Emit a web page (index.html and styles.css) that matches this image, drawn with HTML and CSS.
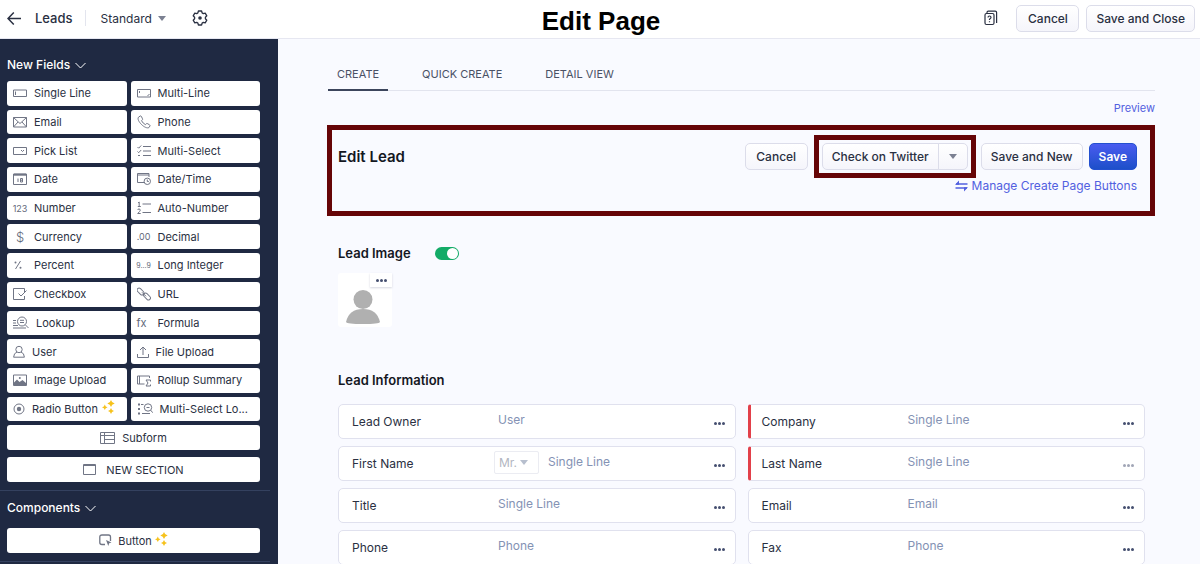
FILE: index.html
```html
<!DOCTYPE html>
<html lang="en">
<head>
  <meta charset="UTF-8" />
  <title>Edit Page</title>
  <link rel="stylesheet" href="styles.css">
</head>
<body>
  <header class="topbar">
    <div class="topbar-left">
      <button class="icon-btn" aria-label="Back">
        <svg width="14" height="14" viewBox="0 0 14 14"><path d="M14 7.500H1M6.800 1.500L1 7.500l5.800 6" stroke-width="1.500"/></svg>
      </button>
      <span class="module">Leads</span>
      <button class="layout-menu">Standard <span class="caret"></span></button>
      <button class="icon-btn" aria-label="Settings">
        <svg width="16" height="16" viewBox="0 0 16 16"><path d="M6.400 1h3.200l.5 1.900 1.200.7 1.900-.5 1.600 2.700-1.400 1.400v1.600l1.400 1.400-1.600 2.700-1.900-.5-1.200.7-.5 1.900H6.400l-.5-1.900-1.200-.7-1.900.5-1.600-2.700L2.600 8.800V7.200L1.200 5.800l1.600-2.700 1.900.5 1.200-.7z" stroke-width="1.300" stroke-linejoin="round"/><circle cx="8" cy="8" r="1.800" class="solid"/></svg>
      </button>
    </div>
    <h1>Edit Page</h1>
    <div class="topbar-right">
      <button class="icon-btn" aria-label="Help">
        <svg width="14" height="16" viewBox="0 0 14 16"><rect x="1" y="3.500" width="9" height="11" rx="1.500" stroke-width="1.200"/><path d="M3 3.200V2.500Q3 1.200 4.300 1.200h6.900Q12.600 1.200 12.600 2.600V13" stroke-width="1.200"/><path d="M4 7.500Q4 6 5.500 6T7 7.500Q7 8.300 5.500 9.200v.8M5.500 11.200v1" stroke-width="1.200"/></svg>
      </button>
      <button class="btn cancel">Cancel</button>
      <button class="btn">Save and Close</button>
    </div>
  </header>

  <div class="page">
    <aside class="sidebar">
      <h2>New Fields <svg width="11" height="7" viewBox="0 0 11 7"><path d="M.5 1l5 5 5-5"/></svg></h2>
      <div class="fields">
        <button class="field"><svg width="14" height="14" viewBox="0 0 14 14"><path d="M.5 4h13v6.500H.5zM2.500 5.500V9"/></svg>Single Line</button>
        <button class="field"><svg width="14" height="14" viewBox="0 0 14 14"><path d="M.5 3.500h13v7.500H.5zM2.500 5v2M10.500 10l2-2"/></svg>Multi-Line</button>
        <button class="field"><svg width="14" height="14" viewBox="0 0 14 14"><path d="M.5 2.500h13v9.500H.5zM.5 2.500L7 8.500l6.500-6M.5 12L5 7M13.500 12L9 7"/></svg>Email</button>
        <button class="field"><svg width="14" height="14" viewBox="0 0 14 14"><path d="M3.200 1L1.500 2.200C.2 4 2 7 4.500 9.500S10.300 13.600 12 12.500l1-1.600q.1-.8-.6-1.200L10.200 8.500q-.7-.2-1 .3l-.7.900Q6 8.500 4.500 5.700l.8-.8q.5-.5.2-1.100L4.300 1.300Q3.900.7 3.200 1z"/></svg>Phone</button>
        <button class="field"><svg width="14" height="14" viewBox="0 0 14 14"><path d="M.5 3.500h13v7H.5zM8 6l1.500 1.500L11 6"/></svg>Pick List</button>
        <button class="field"><svg width="14" height="14" viewBox="0 0 14 14"><path d="M6 2.500h8M6 7h8M6 11.500h8M.5 3l1.200 1.200L4.200 1.500M.5 7.500l1.200 1.200L4.200 6M1 11.500h2"/></svg>Multi-Select</button>
        <button class="field"><svg width="14" height="14" viewBox="0 0 14 14"><path d="M.5 2h13v10.500H.5z"/><path d="M1 2.700h12" stroke-width="2"/><path d="M5 6.500V10M7.500 6.500h2v3.500h-2zM7.500 8.200h2"/></svg>Date</button>
        <button class="field"><svg width="14" height="14" viewBox="0 0 14 14"><path d="M7 10.500H.5v-9h11.500V5M.5 3h11.500"/><circle cx="10.300" cy="9.300" r="3.200"/><path d="M10.300 7.500v2h1.500"/></svg>Date/Time</button>
        <button class="field"><span class="glyph">123</span>Number</button>
        <button class="field"><svg width="14" height="14" viewBox="0 0 14 14"><path d="M5.500 3H14M5.500 11.500H14M1 2l1.200-1v4.500M.8 5.500h3M.7 9q0-1 1.300-1t1.300 1.200Q3.300 10 .7 12.500h3"/></svg>Auto-Number</button>
        <button class="field"><span class="glyph large">$</span>Currency</button>
        <button class="field"><span class="glyph">.00</span>Decimal</button>
        <button class="field"><svg width="14" height="14" viewBox="0 0 14 14"><path d="M7.500 3l-5 8"/><circle class="solid" cx="2.500" cy="4.500" r="1"/><circle class="solid" cx="7.500" cy="9.800" r="1"/></svg>Percent</button>
        <button class="field"><span class="glyph small">9...9</span>Long Integer</button>
        <button class="field"><svg width="14" height="14" viewBox="0 0 14 14"><path d="M11.500 5V1.500H.5v11h11V9M5.500 6.500l2.500 2.500 5.500-5.500"/></svg>Checkbox</button>
        <button class="field"><svg width="14" height="14" viewBox="0 0 14 14"><rect x="-.5" y="2.500" width="8" height="4" rx="2" transform="rotate(45 3.500 4.500)"/><rect x="6" y="7.500" width="8" height="4" rx="2" transform="rotate(45 10 9.500)"/><path d="M5 5.300l4 4"/></svg>URL</button>
        <button class="field"><svg width="16" height="14" viewBox="0 0 16 14"><circle cx="9" cy="5.500" r="4.500"/><path d="M12.300 8.800l3.200 3.200M7 4.300h4M7 6.500h4M0 4.500h3M0 7h3M0 9.500h5M0 12h13"/></svg>Lookup</button>
        <button class="field"><span class="glyph fx">fx</span>Formula</button>
        <button class="field"><svg width="12" height="14" viewBox="0 0 12 14"><circle cx="6" cy="4.500" r="3.200"/><path d="M4 7Q.8 8 .6 12.200h10.800Q11.200 8 8 7"/></svg>User</button>
        <button class="field"><svg width="12" height="14" viewBox="0 0 12 14"><path d="M6 10V2M3 5l3-3 3 3M.5 9v3.500h11V9"/></svg>File Upload</button>
        <button class="field"><svg width="14" height="14" viewBox="0 0 14 14"><path d="M.5 2h13v10.500H.5z"/><path class="solid" d="M1 12V9.500l3-3 2.500 2.500L9.500 7l3.500 3v2z"/><circle class="solid" cx="6.800" cy="5" r="1"/></svg>Image Upload</button>
        <button class="field"><svg width="14" height="14" viewBox="0 0 14 14"><path d="M7.500 11H.5V3h12v2M2.500 3v8M13.500 8.500v-1.500H9l2 3-2 3h4.500v-1.500"/></svg>Rollup Summary</button>
        <button class="field"><svg width="12" height="14" viewBox="0 0 12 14"><circle cx="6" cy="7" r="5"/><circle class="solid" cx="6" cy="7" r="2.200"/></svg>Radio Button<svg class="sparkle" width="13" height="14" viewBox="0 0 13 14"><path d="M9 0q.7 3 3.700 3.500Q9.700 4 9 7 8.300 4 5.300 3.500 8.300 3 9 0zM2.800 4.500q.5 2.400 2.800 2.800-2.300.4-2.800 2.800Q2.300 7.700 0 7.300 2.300 6.900 2.800 4.500zM9 8q.6 2.500 3 3-2.400.5-3 3-.6-2.500-3-3 2.400-.5 3-3z"/></svg></button>
        <button class="field"><svg width="16" height="14" viewBox="0 0 16 14"><circle cx="11" cy="5.500" r="3.700"/><path d="M13.700 8.200l2 2.500M9.500 5.500h3M4 2.500h2.500M5 11.500h8"/><path d="M1 2.500h2M1 7h2M1 11.500h2" stroke-width="2"/></svg>Multi-Select Lo...</button>
        <button class="field wide"><svg width="15" height="12" viewBox="0 0 15 12"><path d="M.5.500h14v11H.5zM.5 3.500h14M4.500.500v11M4.500 7.500h10"/></svg>Subform</button>
      </div>
      <button class="field section-btn"><svg width="13" height="11" viewBox="0 0 13 11"><path d="M.5.500h12v10H.5zM.5 1.500h12"/></svg>NEW SECTION</button>
      <div class="components">
        <h2>Components <svg width="11" height="7" viewBox="0 0 11 7"><path d="M.5 1l5 5 5-5"/></svg></h2>
        <button class="field component"><svg width="13" height="13" viewBox="0 0 13 13"><path d="M6 10.500H3Q.8 10.500.8 8.500V3Q.8 1 3 1h6.500q2 0 2 2v4" stroke-width="1.300"/><path class="solid" d="M7 6l5.500 2.500-2.300.8-.9 2.600z"/></svg>Button<svg class="sparkle" width="13" height="14" viewBox="0 0 13 14"><path d="M9 0q.7 3 3.700 3.500Q9.700 4 9 7 8.300 4 5.300 3.500 8.300 3 9 0zM2.800 4.500q.5 2.400 2.800 2.800-2.300.4-2.800 2.800Q2.300 7.700 0 7.300 2.300 6.900 2.800 4.500zM9 8q.6 2.500 3 3-2.400.5-3 3-.6-2.500-3-3 2.400-.5 3-3z"/></svg></button>
      </div>
    </aside>

    <main class="content">
      <nav class="tabs">
        <a href="#create" class="active">CREATE</a>
        <a href="#quick">QUICK CREATE</a>
        <a href="#detail">DETAIL VIEW</a>
      </nav>
      <a href="#preview" class="preview">Preview</a>

      <section class="edit-lead">
        <h2>Edit Lead</h2>
        <div class="actions">
          <div class="buttons">
            <button class="btn cancel">Cancel</button>
            <div class="split">
              <button class="btn">Check on Twitter</button>
              <button class="btn more" aria-label="More buttons"><span class="caret"></span></button>
            </div>
            <button class="btn">Save and New</button>
            <button class="btn primary">Save</button>
          </div>
          <a href="#manage" class="manage"><svg width="13" height="12" viewBox="0 0 13 12"><path d="M1 4h11.500M.5 8H12" stroke-width="1.400"/><path class="solid" d="M0 4.700L4 .5v4.200zM13 7.300L9 11.500V7.300z"/></svg>Manage Create Page Buttons</a>
        </div>
      </section>

      <div class="lead-image">
        <label for="imageToggle">Lead Image</label>
        <input type="checkbox" id="imageToggle" class="toggle" checked>
      </div>
      <div class="avatar">
        <svg width="34" height="34" viewBox="0 0 34 34"><circle cx="17" cy="9.500" r="9.500"/><path d="M0 32Q3 19 17 19t17 13q-1 2-17 2T0 32z"/></svg>
        <button class="dots" aria-label="Image options"><i></i><i></i><i></i></button>
      </div>

      <h2 class="info-title">Lead Information</h2>
      <div class="cards">
        <div class="card"><span class="name">Lead Owner</span><span class="type">User</span><button class="dots" aria-label="Options"><i></i><i></i><i></i></button></div>
        <div class="card required"><span class="name">Company</span><span class="type">Single Line</span><button class="dots" aria-label="Options"><i></i><i></i><i></i></button></div>
        <div class="card"><label class="name" for="salutation">First Name</label><span class="select-wrap"><select id="salutation"><option>Mr.</option></select><span class="caret"></span></span><span class="type">Single Line</span><button class="dots" aria-label="Options"><i></i><i></i><i></i></button></div>
        <div class="card required"><span class="name">Last Name</span><span class="type">Single Line</span><button class="dots muted" aria-label="Options"><i></i><i></i><i></i></button></div>
        <div class="card"><span class="name">Title</span><span class="type">Single Line</span><button class="dots" aria-label="Options"><i></i><i></i><i></i></button></div>
        <div class="card"><span class="name">Email</span><span class="type">Email</span><button class="dots" aria-label="Options"><i></i><i></i><i></i></button></div>
        <div class="card"><span class="name">Phone</span><span class="type">Phone</span><button class="dots" aria-label="Options"><i></i><i></i><i></i></button></div>
        <div class="card"><span class="name">Fax</span><span class="type">Phone</span><button class="dots" aria-label="Options"><i></i><i></i><i></i></button></div>
      </div>
    </main>
  </div>
</body>
</html>
```

FILE: styles.css
```css
* {
  box-sizing: border-box;
}
body {
  margin: 0;
  height: 100vh;
  display: flex;
  flex-direction: column;
  overflow: hidden;
  font-family: Inter, "Liberation Sans", sans-serif;
  font-size: 12px;
  color: #2a3042;
  background: #f9faff;
}
button {
  font: inherit;
  color: inherit;
  cursor: pointer;
}
a {
  text-decoration: none;
}
svg {
  display: block;
  flex: none;
  fill: none;
  stroke: currentColor;
}
svg .solid {
  fill: currentColor;
  stroke: none;
}
h1, h2 {
  margin: 0;
}

/* top bar */
.topbar {
  display: grid;
  grid-template-columns: 1fr auto 1fr;
  align-items: center;
  flex: none;
  height: 39px;
  padding: 0 5px 4px 7px;
  background: #fff;
  border-bottom: 1px solid #e6e7f1;
}
.topbar h1 {
  font: bold 26px/30px "Liberation Sans", Arial, sans-serif;
  color: #000;
  padding-top: 6px;
}
.topbar-left, .topbar-right {
  display: flex;
  align-items: center;
}
.topbar-right {
  justify-content: flex-end;
  gap: 7px;
}
.topbar-right .icon-btn {
  margin-right: 11px;
}
.icon-btn {
  padding: 0;
  border: 0;
  background: none;
}
.module {
  margin-left: 14px;
  padding-right: 12px;
  border-right: 1px solid #e3e5ee;
  font-size: 13px;
  font-weight: 500;
}
.layout-menu {
  display: flex;
  align-items: center;
  gap: 6px;
  margin: 0 26px 0 15px;
  padding: 0;
  border: 0;
  background: none;
}
.caret {
  border: 4px solid transparent;
  border-top: 5px solid #7c8192;
  border-bottom: 0;
}
.btn {
  height: 27px;
  padding: 0 9px;
  border: 1px solid #dcddea;
  border-radius: 5px;
  background: linear-gradient(#fff, #f5f5fb);
  font-weight: 500;
  white-space: nowrap;
}
.btn.cancel {
  min-width: 63px;
}
.btn.primary {
  border-color: #2450cf;
  background: linear-gradient(#4a5cf0, #1d4fc9);
  color: #fff;
  font-weight: 600;
}

/* sidebar */
.page {
  flex: 1;
  display: flex;
  min-height: 0;
}
.sidebar {
  flex: none;
  width: 278px;
  padding: 17px 18px 0 7px;
  overflow: hidden;
  background: #1f2942;
}
.sidebar h2 {
  display: flex;
  align-items: center;
  gap: 5px;
  color: #fff;
  font-size: 12px;
  line-height: 18px;
  font-weight: 500;
}
.fields {
  display: grid;
  grid-template-columns: 12fr 13fr;
  grid-auto-rows: 1fr;
  gap: 4px;
  height: 369px;
  margin-top: 7px;
}
.field {
  display: flex;
  align-items: center;
  gap: 7px;
  min-width: 0;
  height: 25px;
  padding: 0 6px;
  border: 0;
  border-radius: 3px;
  background: #fff;
  font-size: 11px;
  white-space: nowrap;
}
.fields .field {
  height: auto;
}
.field svg {
  color: #707585;
}
.field .sparkle {
  margin: 0 0 4px -3px;
  fill: #f6c21c;
  stroke: none;
}
.glyph {
  display: flex;
  justify-content: center;
  width: 14px;
  color: #62687a;
  font-size: 9px;
}
.glyph.small {
  font-size: 7px;
}
.glyph.large {
  font-size: 13px;
  font-weight: 300;
}
.glyph.fx {
  justify-content: flex-start;
  font-size: 11px;
}
.wide {
  grid-column: 1 / -1;
  justify-content: center;
}
.section-btn, .component {
  width: 100%;
  justify-content: center;
}
.section-btn {
  gap: 10px;
  margin-top: 7px;
}
.components {
  margin: 8px -10px 0 -7px;
  padding: 8px 10px 8px 7px;
  border-top: 1px solid #34415f;
  border-bottom: 1px solid #34415f;
}
.component {
  gap: 6px;
  margin-top: 11px;
}

/* main area */
.content {
  flex: 1;
  min-width: 0;
  padding: 26px 45px 0 49px;
}
.tabs {
  display: flex;
  gap: 25px;
  margin-left: 1px;
  border-bottom: 1px solid #e2e4ee;
}
.tabs a {
  padding: 2px 9px 8px;
  margin-bottom: -1px;
  color: #4a5165;
  font-size: 11px;
  line-height: 14px;
}
.tabs .active {
  border-bottom: 2px solid #3c455c;
}
.preview {
  display: block;
  margin: 9px 0 9px;
  text-align: right;
  font-size: 11px;
  line-height: 16px;
}
.preview, .manage {
  color: #5260e0;
}
.edit-lead {
  display: flex;
  justify-content: space-between;
  height: 91px;
  padding: 13px 13px 0 6px;
  border: 5px solid #660507;
}
.edit-lead h2 {
  font-size: 15px;
  line-height: 27px;
  font-weight: 600;
  color: #14171f;
}
.buttons {
  display: flex;
  justify-content: flex-end;
}
.split {
  display: flex;
  margin: 0 13px 0 14px;
  outline: 5px solid #660507;
  outline-offset: 3px;
}
.split .btn:first-child {
  border-radius: 5px 0 0 5px;
}
.split .more {
  width: 30px;
  margin-left: -1px;
  padding: 0 10px;
  border-radius: 0 5px 5px 0;
}
.more .caret {
  display: block;
}
.buttons .primary {
  margin-left: 6px;
}
.manage {
  display: flex;
  align-items: center;
  justify-content: flex-end;
  gap: 4px;
  margin-top: 8px;
  line-height: 16px;
}
.lead-image {
  display: flex;
  align-items: center;
  gap: 24px;
  margin: 28px 0 0 11px;
  color: #14171f;
  font-size: 13px;
  line-height: 18px;
  font-weight: 600;
}
.toggle {
  appearance: none;
  width: 24px;
  height: 13px;
  margin: 0;
  padding: 1px;
  border-radius: 7px;
  background: #b9bdc9;
}
.toggle::before {
  content: "";
  display: block;
  width: 11px;
  height: 11px;
  border-radius: 50%;
  background: #fff;
}
.toggle:checked {
  background: #13ab67;
}
.toggle:checked::before {
  margin-left: auto;
}
.avatar {
  position: relative;
  display: flex;
  align-items: flex-end;
  justify-content: center;
  width: 54px;
  height: 54px;
  margin: 11px 0 0 11px;
  padding: 0 4px 3px 0;
  border-radius: 3px;
  background: #fff;
}
.avatar svg {
  fill: #b0b0b0;
  stroke: none;
}
.dots {
  display: flex;
  align-items: center;
  justify-content: center;
  gap: 1px;
  padding: 0;
  border: 0;
  background: none;
}
.dots i {
  width: 3px;
  height: 3px;
  border-radius: 50%;
  background: #454f70;
}
.dots.muted {
  opacity: 0.5;
}
.avatar .dots {
  position: absolute;
  top: 0;
  right: 0;
  width: 22px;
  height: 14px;
  background: #fff;
  box-shadow: 0 1px 2px #d5d7e0;
}
.info-title {
  margin: 44px 0 15px 11px;
  color: #14171f;
  font-size: 13px;
  line-height: 18px;
  font-weight: 600;
}
.cards {
  display: grid;
  grid-template-columns: 1fr 1fr;
  gap: 7px 12px;
  padding: 0 10px 0 11px;
}
.card {
  display: flex;
  align-items: center;
  height: 35px;
  padding: 0 10px 0 13px;
  border: 1px solid #e0e1ee;
  border-radius: 5px;
  background: #fff;
}
.card.required {
  padding-left: 11px;
  border-left: 3px solid #e2404a;
  border-radius: 3px 5px 5px 3px;
}
.name {
  width: 146px;
}
.type {
  padding-bottom: 4px;
  color: #8492b4;
}
.card .dots {
  margin: 4px 0 0 auto;
}
.select-wrap {
  display: flex;
  align-items: center;
  height: 23px;
  margin: 0 9px 3px -4px;
  padding: 0 10px 0 4px;
  border: 1px solid #ebecf2;
  border-radius: 2px;
}
.select-wrap select {
  appearance: none;
  width: 21px;
  padding: 0;
  border: 0;
  background: none;
  color: #b2b6c1;
  font: inherit;
}
.select-wrap .caret {
  border-top-color: #b7bfce;
}
```
